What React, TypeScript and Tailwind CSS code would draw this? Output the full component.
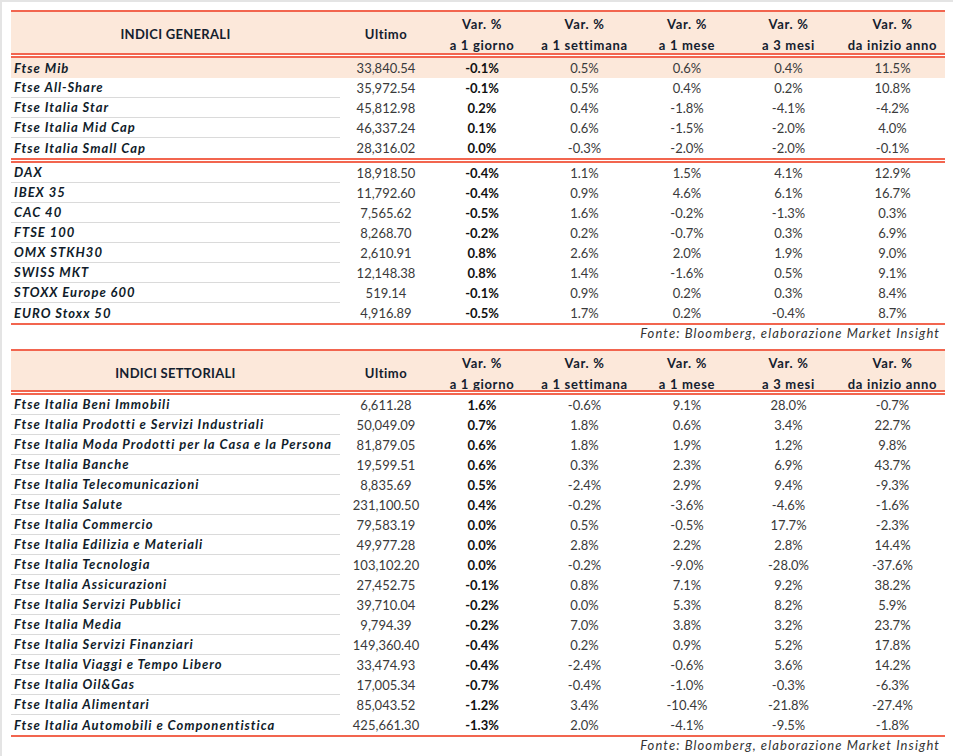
import React from "react";

type Row = [string, string, string, string, string, string, string];

const COLS = "grid grid-cols-[329px_92px_100px_105px_100px_103px_105px]";

const generali: Row[][] = [
  [
    ["Ftse Mib", "33,840.54", "-0.1%", "0.5%", "0.6%", "0.4%", "11.5%"],
    ["Ftse All-Share", "35,972.54", "-0.1%", "0.5%", "0.4%", "0.2%", "10.8%"],
    ["Ftse Italia Star", "45,812.98", "0.2%", "0.4%", "-1.8%", "-4.1%", "-4.2%"],
    ["Ftse Italia Mid Cap", "46,337.24", "0.1%", "0.6%", "-1.5%", "-2.0%", "4.0%"],
    ["Ftse Italia Small Cap", "28,316.02", "0.0%", "-0.3%", "-2.0%", "-2.0%", "-0.1%"],
  ],
  [
    ["DAX", "18,918.50", "-0.4%", "1.1%", "1.5%", "4.1%", "12.9%"],
    ["IBEX 35", "11,792.60", "-0.4%", "0.9%", "4.6%", "6.1%", "16.7%"],
    ["CAC 40", "7,565.62", "-0.5%", "1.6%", "-0.2%", "-1.3%", "0.3%"],
    ["FTSE 100", "8,268.70", "-0.2%", "0.2%", "-0.7%", "0.3%", "6.9%"],
    ["OMX STKH30", "2,610.91", "0.8%", "2.6%", "2.0%", "1.9%", "9.0%"],
    ["SWISS MKT", "12,148.38", "0.8%", "1.4%", "-1.6%", "0.5%", "9.1%"],
    ["STOXX Europe 600", "519.14", "-0.1%", "0.9%", "0.2%", "0.3%", "8.4%"],
    ["EURO Stoxx 50", "4,916.89", "-0.5%", "1.7%", "0.2%", "-0.4%", "8.7%"],
  ],
];

const settoriali: Row[][] = [
  [
    ["Ftse Italia Beni Immobili", "6,611.28", "1.6%", "-0.6%", "9.1%", "28.0%", "-0.7%"],
    ["Ftse Italia Prodotti e Servizi Industriali", "50,049.09", "0.7%", "1.8%", "0.6%", "3.4%", "22.7%"],
    ["Ftse Italia Moda Prodotti per la Casa e la Persona", "81,879.05", "0.6%", "1.8%", "1.9%", "1.2%", "9.8%"],
    ["Ftse Italia Banche", "19,599.51", "0.6%", "0.3%", "2.3%", "6.9%", "43.7%"],
    ["Ftse Italia Telecomunicazioni", "8,835.69", "0.5%", "-2.4%", "2.9%", "9.4%", "-9.3%"],
    ["Ftse Italia Salute", "231,100.50", "0.4%", "-0.2%", "-3.6%", "-4.6%", "-1.6%"],
    ["Ftse Italia Commercio", "79,583.19", "0.0%", "0.5%", "-0.5%", "17.7%", "-2.3%"],
    ["Ftse Italia Edilizia e Materiali", "49,977.28", "0.0%", "2.8%", "2.2%", "2.8%", "14.4%"],
    ["Ftse Italia Tecnologia", "103,102.20", "0.0%", "-0.2%", "-9.0%", "-28.0%", "-37.6%"],
    ["Ftse Italia Assicurazioni", "27,452.75", "-0.1%", "0.8%", "7.1%", "9.2%", "38.2%"],
    ["Ftse Italia Servizi Pubblici", "39,710.04", "-0.2%", "0.0%", "5.3%", "8.2%", "5.9%"],
    ["Ftse Italia Media", "9,794.39", "-0.2%", "7.0%", "3.8%", "3.2%", "23.7%"],
    ["Ftse Italia Servizi Finanziari", "149,360.40", "-0.4%", "0.2%", "0.9%", "5.2%", "17.8%"],
    ["Ftse Italia Viaggi e Tempo Libero", "33,474.93", "-0.4%", "-2.4%", "-0.6%", "3.6%", "14.2%"],
    ["Ftse Italia Oil&Gas", "17,005.34", "-0.7%", "-0.4%", "-1.0%", "-0.3%", "-6.3%"],
    ["Ftse Italia Alimentari", "85,043.52", "-1.2%", "3.4%", "-10.4%", "-21.8%", "-27.4%"],
    ["Ftse Italia Automobili e Componentistica", "425,661.30", "-1.3%", "2.0%", "-4.1%", "-9.5%", "-1.8%"],
  ],
];

const periods = ["a 1 giorno", "a 1 settimana", "a 1 mese", "a 3 mesi", "da inizio anno"];

function DoubleRule() {
  return (
    <div className="flex flex-col">
      <div className="h-[2px] bg-[#f2654f]" />
      <div className="h-[1px] bg-white" />
      <div className="h-[2px] bg-[#f2654f]" />
    </div>
  );
}

function Header({ title, tall }: { title: string; tall?: boolean }) {
  return (
    <>
      <div className="h-[2px] bg-[#f2654f]" />
      <div
        className={`${COLS} ${tall ? "h-[41px]" : "h-[39px]"} bg-[#fce8da] items-center font-bold text-[#14202e]`}
      >
        <div className="text-center tracking-[0.3px]">{title}</div>
        <div className="text-center tracking-[0.5px]">Ultimo</div>
        {periods.map((p) => (
          <div key={p} className="text-center leading-[21px] pt-[2px] tracking-[0.7px]">
            <div>Var. %</div>
            <div>{p}</div>
          </div>
        ))}
      </div>
      <DoubleRule />
    </>
  );
}

function DataRow({ row, last, highlight }: { row: Row; last: boolean; highlight?: boolean }) {
  const [name, ultimo, giorno, ...rest] = row;
  return (
    <div className={`${COLS} h-[20px] items-center ${highlight ? "bg-[#fce8da]" : ""}`}>
      <div
        className={`h-full flex items-center pl-[3px] font-bold italic tracking-[1px] text-[#101c2a] ${
          last || highlight ? "" : "border-b border-[#dadada]"
        }`}
      >
        {name}
      </div>
      <div className="text-center text-[#3a3a3a]">{ultimo}</div>
      <div className="text-center font-bold text-[#111]">{giorno}</div>
      {rest.map((v, i) => (
        <div key={i} className="text-center text-[#3a3a3a]">
          {v}
        </div>
      ))}
    </div>
  );
}

function Table({
  title,
  groups,
  highlightFirst,
  tall,
}: {
  title: string;
  groups: Row[][];
  highlightFirst?: boolean;
  tall?: boolean;
}) {
  return (
    <div className="w-[934px]">
      <Header title={title} tall={tall} />
      {groups.map((g, gi) => (
        <div key={gi}>
          {gi > 0 && <DoubleRule />}
          {g.map((r, ri) => (
            <DataRow key={r[0]} row={r} last={ri === g.length - 1} highlight={highlightFirst && gi === 0 && ri === 0} />
          ))}
        </div>
      ))}
      <div className="h-[2px] bg-[#f2654f]" />
      <div className="h-[20px] flex items-center justify-end pr-[5px] pb-[4px] italic tracking-[1.1px] text-[#333] text-[13px]">
        Fonte: Bloomberg, elaborazione Market Insight
      </div>
    </div>
  );
}

export default function App() {
  return (
    <div className="w-[953px] h-[756px] bg-white border-t-2 border-l-2 border-[#e4e4e4] pt-[8px] pl-[9px] font-['Lato',sans-serif] text-[13px] leading-none">
      <Table title="INDICI GENERALI" groups={generali} highlightFirst tall />
      <div className="h-[4px]" />
      <Table title="INDICI SETTORIALI" groups={settoriali} />
    </div>
  );
}
